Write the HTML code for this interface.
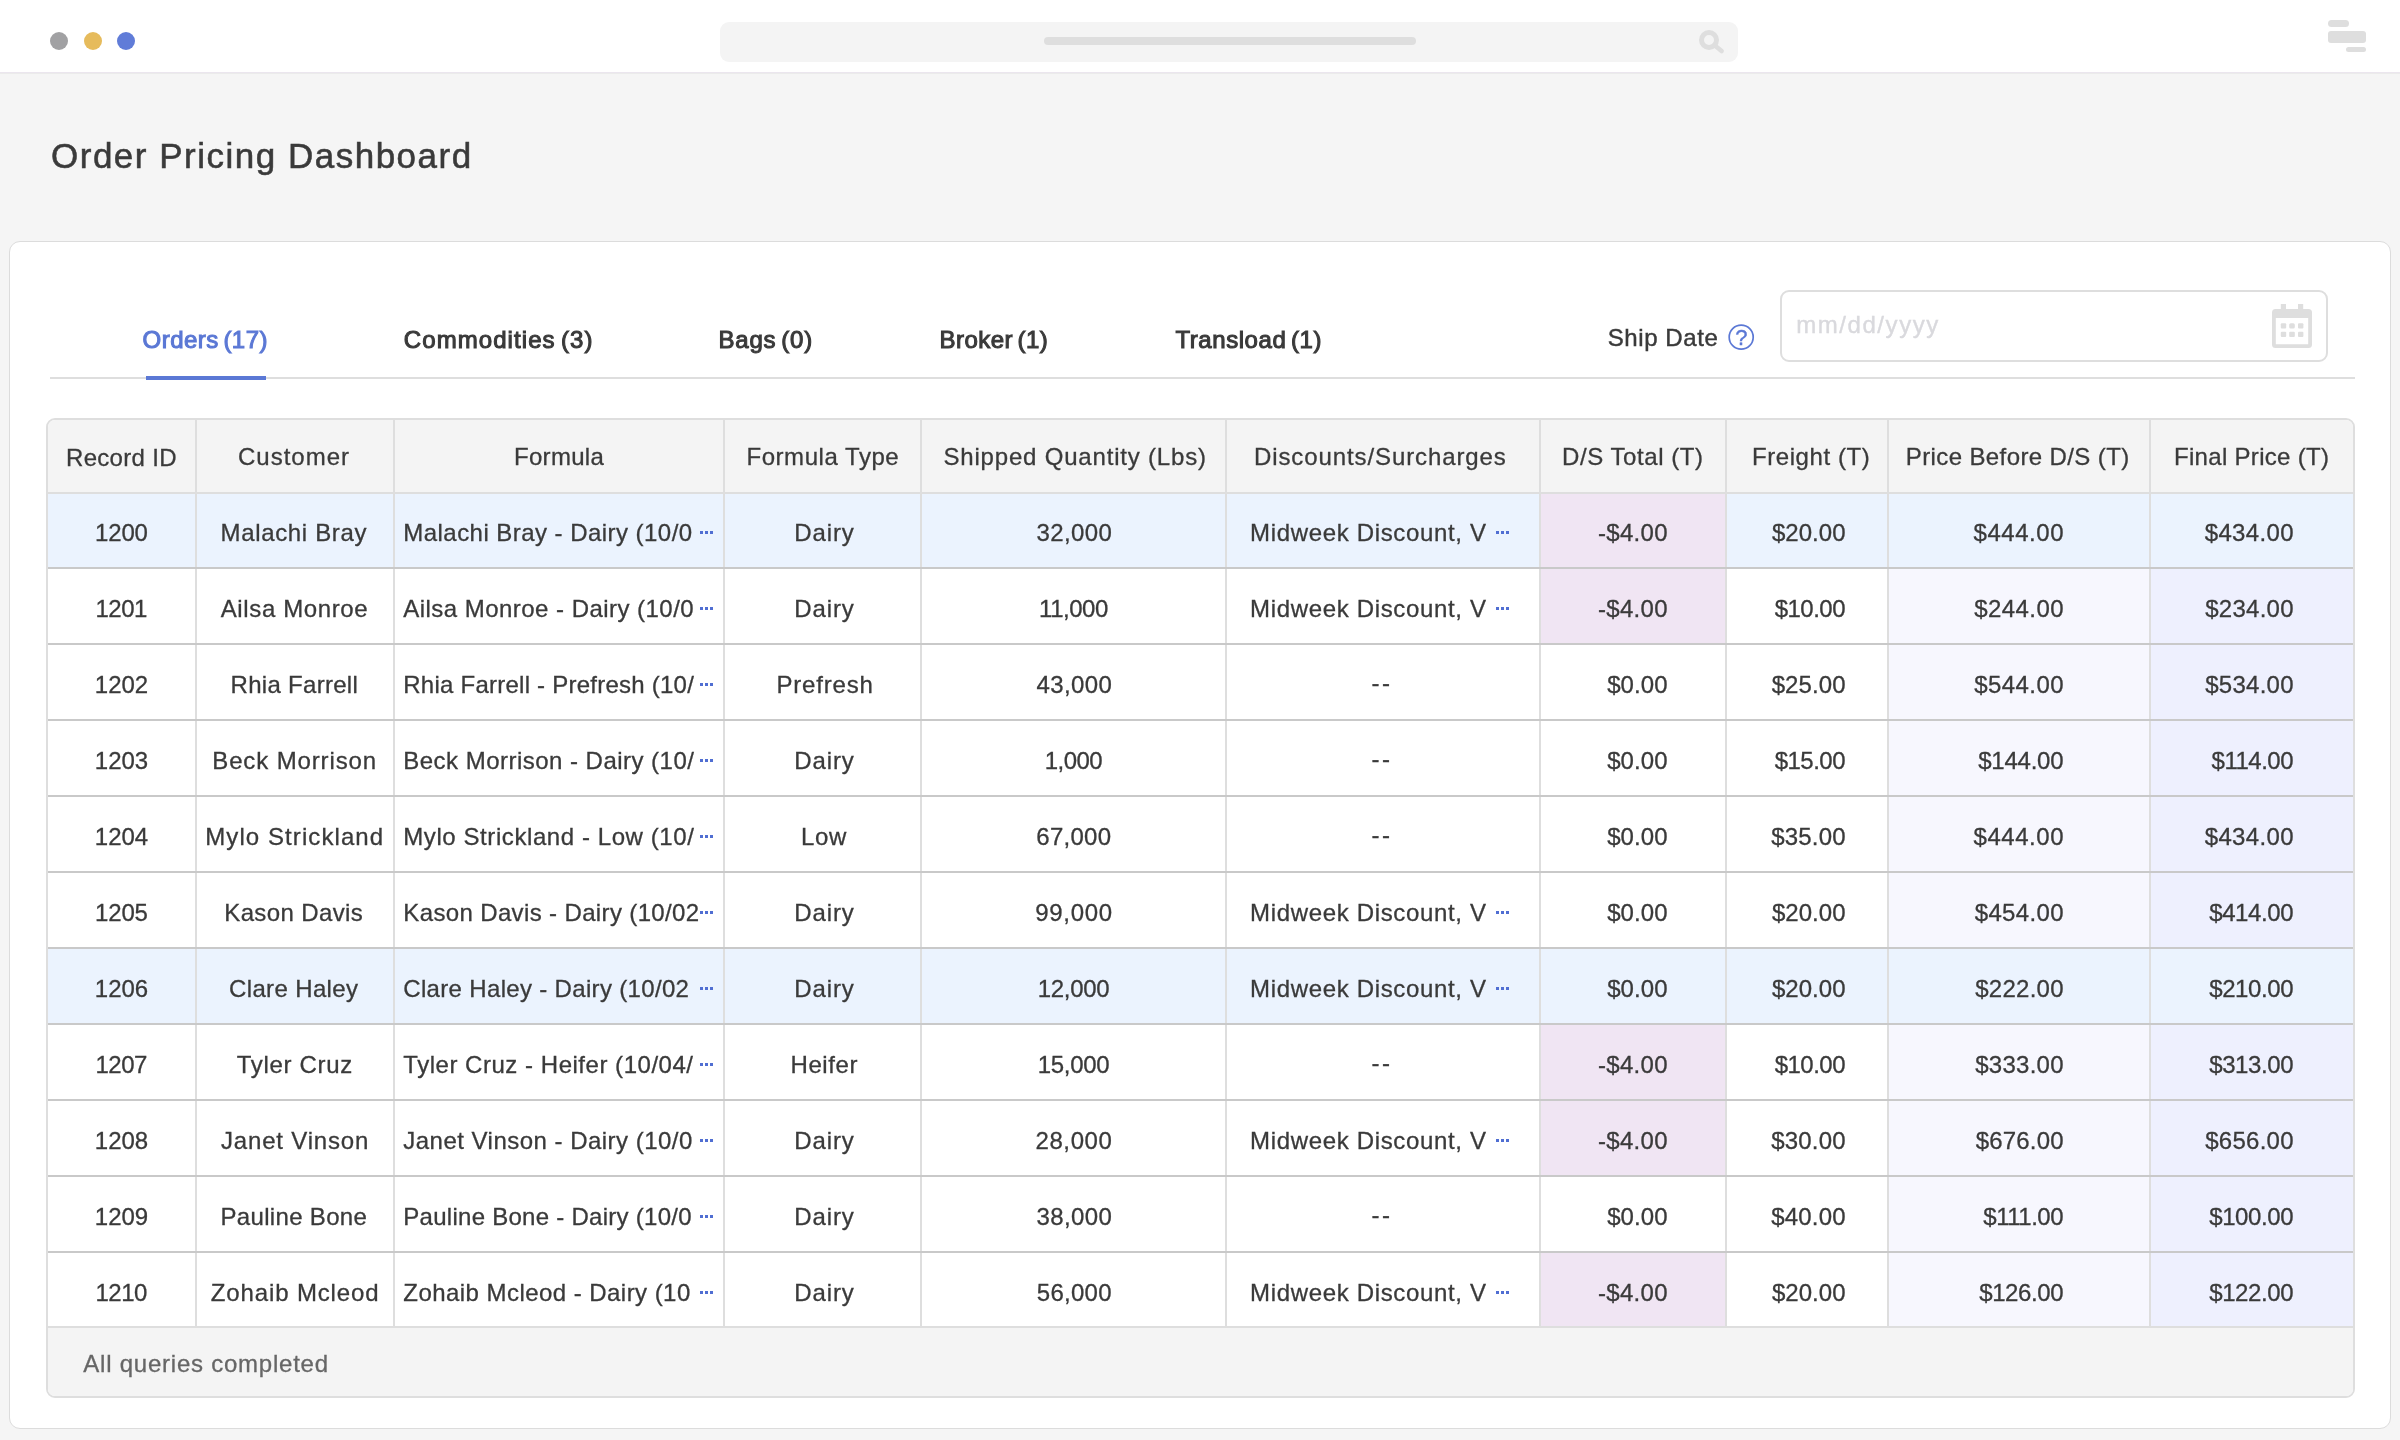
<!DOCTYPE html><html lang="en"><head><meta charset="utf-8"><title>Order Pricing Dashboard</title><style>*{box-sizing:border-box;margin:0;padding:0}
html,body{width:2400px;height:1440px;overflow:hidden}
body{background:#f5f5f5;font-family:"Liberation Sans",sans-serif;color:#3b3b3b;position:relative}
.hdr{position:absolute;left:0;top:0;width:2400px;height:73px;background:#fff;border-bottom:1px solid #ebe6ee;box-shadow:0 1px 0 #ebebeb}
.dot{position:absolute;top:32px;width:18px;height:18px;border-radius:50%}
.search{position:absolute;left:720px;top:22px;width:1018px;height:40px;border-radius:9px;background:#f4f4f4}
.search .bar{position:absolute;left:324px;top:15px;width:372px;height:8px;border-radius:4px;background:#dedede}
.search svg{position:absolute;left:976px;top:7px}
.menu{position:absolute;left:2328px;top:20px;width:40px;height:34px}
.menu i{position:absolute;background:#dedede;display:block}
.card{position:absolute;left:9px;top:241px;width:2382px;height:1188px;background:#fff;border:1px solid #dcdcdc;border-radius:11px}
.tabs{position:absolute;left:0;top:0}
.tabline{position:absolute;left:50px;top:377px;width:2305px;height:2px;background:#dedede}
.tabon{position:absolute;left:146px;top:376px;width:120px;height:4px;background:#5b78d5}
.help{position:absolute;left:1728px;top:324px}
.inp{position:absolute;left:1780px;top:290px;width:548px;height:72px;border:2px solid #dedede;border-radius:9px;background:#fff}
.inp svg{position:absolute;left:490px;top:12px}
.tbl{position:absolute;left:46px;top:418px;width:2309px;height:980px;border:2px solid #dedede;border-radius:9px;overflow:hidden;background:#fff}
.tr{position:absolute;left:0;width:2305px}
.tr.th{top:0;height:72px;background:#f4f4f4}
.tr.hl{background:#ebf3fe}
.bg{position:absolute;top:0;height:100%;display:block}
.bg.d8{background:#f7f7fe}
.bg.d9{background:#eef0fe}
.bg.neg{background:#f0e5f3}
.tx{position:absolute;left:0;top:0;width:2305px;height:976px}
.tx{will-change:transform}
.tx span{position:absolute;font-size:24px;line-height:30px;white-space:nowrap;color:#3a3a3a;-webkit-text-stroke:.3px #3a3a3a}
.tx span.ft{color:#666;-webkit-text-stroke:.3px #666}
.el{display:block;position:absolute;width:13px;height:3.4px;background:linear-gradient(90deg,#506ed2 0,#506ed2 3px,transparent 3px,transparent 5px,#506ed2 5px,#506ed2 8px,transparent 8px,transparent 10px,#506ed2 10px,#506ed2 13px)}
.vl{position:absolute;top:0;width:2px;height:908px;background:#dedede}
.hl0{position:absolute;left:0;width:2305px;height:2px;background:#dedede}
.hl1{position:absolute;left:0;width:2305px;height:2px;background:#c9c9c9}
.foot{position:absolute;left:0;top:908px;width:2305px;height:68px;background:#f4f4f4}
.tt{position:absolute;left:0;top:0;width:2400px;height:420px;will-change:transform}
.tt span{position:absolute;white-space:nowrap;color:#3a3a3a}
.tt .h1{font-size:35px;-webkit-text-stroke:.55px #3a3a3a}
.tt .q{font-size:22px;color:#5b78d5;-webkit-text-stroke:.4px #5b78d5}
.tt .tab{font-size:24px;-webkit-text-stroke:1.05px #3a3a3a}
.tt .tab.on{color:#5b78d5;-webkit-text-stroke:1.05px #5b78d5}
.tt .ship{font-size:24px;-webkit-text-stroke:.45px #3a3a3a}
.tt .ph{font-size:24px;color:#d9d9dd;-webkit-text-stroke:.4px #d9d9dd}
</style></head><body>
<div class="hdr">
<div class="dot" style="left:50px;background:#a1a1a3"></div>
<div class="dot" style="left:83.5px;background:#e6bb5c"></div>
<div class="dot" style="left:117px;background:#607cd8"></div>
<div class="search"><div class="bar"></div>
<svg width="32" height="28" viewBox="0 0 32 28"><circle cx="13" cy="11" r="7.5" fill="none" stroke="#dedede" stroke-width="5"/><path d="M18.5 16.3 L25.6 22" stroke="#dedede" stroke-width="4.6" stroke-linecap="round"/></svg>
</div>
<div class="menu"><i style="left:0;top:0;width:21px;height:7px;border-radius:3.5px"></i><i style="left:0;top:10.5px;width:38px;height:12.5px;border-radius:3px"></i><i style="left:18px;top:27px;width:20px;height:5px;border-radius:2.5px"></i></div>
</div>
<div class="card"></div>
<div class="tabline"></div><div class="tabon"></div>
<svg class="help" width="27" height="27" viewBox="0 0 27 27"><circle cx="13.2" cy="13.2" r="12" fill="none" stroke="#5b78d5" stroke-width="1.7"/></svg>
<div class="inp">
<svg width="44" height="48" viewBox="0 0 44 48"><g fill="#dedede"><rect x="8.8" y="0" width="5.2" height="7"/><rect x="26" y="0" width="5.2" height="7"/><path d="M3.5 5 h33 a3.5 3.5 0 0 1 3.5 3.5 v32 a3.5 3.5 0 0 1 -3.5 3.5 h-33 a3.5 3.5 0 0 1 -3.5 -3.5 v-32 a3.5 3.5 0 0 1 3.5 -3.5 z M3.8 14 v26.2 h32.4 v-26.2 z" fill-rule="evenodd"/><rect x="8.8" y="19.2" width="5.4" height="5.4" rx="1"/><rect x="17.2" y="19.2" width="5.6" height="5.4" rx="1.6"/><rect x="26" y="19.2" width="5.4" height="5.4" rx="1"/><rect x="8.8" y="27.7" width="5.4" height="5.4" rx="1"/><rect x="17.2" y="27.7" width="5.6" height="5.4" rx="1"/><rect x="26" y="27.7" width="5.4" height="5.4" rx="1"/></g></svg>
</div>
<div class="tt">
<span class="h1" style="left:51.00px;top:134.17px;line-height:44px;letter-spacing:1.502px;word-spacing:0px">Order Pricing Dashboard</span>
<span class="tab on" style="left:142.60px;top:324.88px;line-height:30px;letter-spacing:0.470px;word-spacing:-2.5px">Orders (17)</span>
<span class="tab" style="left:403.80px;top:324.88px;line-height:30px;letter-spacing:1.075px;word-spacing:-2.5px">Commodities (3)</span>
<span class="tab" style="left:718.50px;top:324.88px;line-height:30px;letter-spacing:0.784px;word-spacing:-2.5px">Bags (0)</span>
<span class="tab" style="left:939.50px;top:324.88px;line-height:30px;letter-spacing:0.445px;word-spacing:-2.5px">Broker (1)</span>
<span class="tab" style="left:1175.50px;top:324.88px;line-height:30px;letter-spacing:0.555px;word-spacing:-2.5px">Transload (1)</span>
<span class="ship" style="left:1607.70px;top:322.88px;line-height:30px;letter-spacing:0.594px;word-spacing:0px">Ship Date</span>
<span class="ph" style="left:1796.20px;top:310.38px;line-height:30px;letter-spacing:1.565px;word-spacing:0px">mm/dd/yyyy</span>
<span class="q" style="left:1735.2px;top:323.6px;line-height:28px">?</span>
</div>
<div>

<div class="tbl">
<div class="tr th"></div>
<div class="tr hl" style="top:74px;height:73px">
<i class="bg neg" style="left:1493px;width:184px"></i>
</div>
<div class="tr" style="top:149px;height:74px">
<i class="bg neg" style="left:1493px;width:184px"></i>
<i class="bg d8" style="left:1841px;width:260px"></i>
<i class="bg d9" style="left:2103px;width:202px"></i>
</div>
<div class="tr" style="top:225px;height:74px">
<i class="bg d8" style="left:1841px;width:260px"></i>
<i class="bg d9" style="left:2103px;width:202px"></i>
</div>
<div class="tr" style="top:301px;height:74px">
<i class="bg d8" style="left:1841px;width:260px"></i>
<i class="bg d9" style="left:2103px;width:202px"></i>
</div>
<div class="tr" style="top:377px;height:74px">
<i class="bg d8" style="left:1841px;width:260px"></i>
<i class="bg d9" style="left:2103px;width:202px"></i>
</div>
<div class="tr" style="top:453px;height:74px">
<i class="bg d8" style="left:1841px;width:260px"></i>
<i class="bg d9" style="left:2103px;width:202px"></i>
</div>
<div class="tr hl" style="top:529px;height:74px">
</div>
<div class="tr" style="top:605px;height:74px">
<i class="bg neg" style="left:1493px;width:184px"></i>
<i class="bg d8" style="left:1841px;width:260px"></i>
<i class="bg d9" style="left:2103px;width:202px"></i>
</div>
<div class="tr" style="top:681px;height:74px">
<i class="bg neg" style="left:1493px;width:184px"></i>
<i class="bg d8" style="left:1841px;width:260px"></i>
<i class="bg d9" style="left:2103px;width:202px"></i>
</div>
<div class="tr" style="top:757px;height:74px">
<i class="bg d8" style="left:1841px;width:260px"></i>
<i class="bg d9" style="left:2103px;width:202px"></i>
</div>
<div class="tr" style="top:833px;height:73px">
<i class="bg neg" style="left:1493px;width:184px"></i>
<i class="bg d8" style="left:1841px;width:260px"></i>
<i class="bg d9" style="left:2103px;width:202px"></i>
</div>
<div class="vl" style="left:147px"></div>
<div class="vl" style="left:345px"></div>
<div class="vl" style="left:675px"></div>
<div class="vl" style="left:872px"></div>
<div class="vl" style="left:1177px"></div>
<div class="vl" style="left:1491px"></div>
<div class="vl" style="left:1677px"></div>
<div class="vl" style="left:1839px"></div>
<div class="vl" style="left:2101px"></div>
<div class="hl0" style="top:72px"></div>
<div class="hl1" style="top:147px"></div>
<div class="hl1" style="top:223px"></div>
<div class="hl1" style="top:299px"></div>
<div class="hl1" style="top:375px"></div>
<div class="hl1" style="top:451px"></div>
<div class="hl1" style="top:527px"></div>
<div class="hl1" style="top:603px"></div>
<div class="hl1" style="top:679px"></div>
<div class="hl1" style="top:755px"></div>
<div class="hl1" style="top:831px"></div>
<div class="hl0" style="top:906px"></div>
<div class="foot"></div>
<div class="tx">
<span style="left:18.00px;top:22.88px;letter-spacing:0.312px">Record ID</span>
<span style="left:190.00px;top:22.18px;letter-spacing:0.995px">Customer</span>
<span style="left:466.00px;top:22.18px;letter-spacing:0.305px">Formula</span>
<span style="left:698.50px;top:22.18px;letter-spacing:0.539px">Formula Type</span>
<span style="left:895.50px;top:22.18px;letter-spacing:0.810px">Shipped Quantity (Lbs)</span>
<span style="left:1206.00px;top:22.18px;letter-spacing:0.894px">Discounts/Surcharges</span>
<span style="left:1514.00px;top:22.18px;letter-spacing:0.567px">D/S Total (T)</span>
<span style="left:1704.00px;top:22.18px;letter-spacing:0.573px">Freight (T)</span>
<span style="left:1857.80px;top:22.18px;letter-spacing:0.387px">Price Before D/S (T)</span>
<span style="left:2126.00px;top:22.18px;letter-spacing:0.308px">Final Price (T)</span>
<span style="left:47.05px;top:97.68px;letter-spacing:-0.181px">1200</span>
<span style="left:172.50px;top:97.68px;letter-spacing:0.662px">Malachi Bray</span>
<span style="left:355.30px;top:97.68px;letter-spacing:0.457px">Malachi Bray - Dairy (10/0</span>
<i class="el" style="left:652.3px;top:110.60000000000002px"></i>
<span style="left:746.25px;top:97.68px;letter-spacing:0.874px">Dairy</span>
<span style="left:988.50px;top:97.68px;letter-spacing:0.388px">32,000</span>
<span style="left:1202.00px;top:97.68px;letter-spacing:0.662px">Midweek Discount, V</span>
<i class="el" style="left:1448px;top:110.60000000000002px"></i>
<span style="left:1549.95px;top:97.68px;letter-spacing:0.309px">-$4.00</span>
<span style="left:1723.95px;top:97.68px;letter-spacing:0.038px">$20.00</span>
<span style="left:1925.60px;top:97.68px;letter-spacing:0.532px">$444.00</span>
<span style="left:2156.70px;top:97.68px;letter-spacing:0.349px">$434.00</span>
<span style="left:47.53px;top:173.68px;letter-spacing:-0.500px">1201</span>
<span style="left:172.75px;top:173.68px;letter-spacing:0.617px">Ailsa Monroe</span>
<span style="left:355.30px;top:173.68px;letter-spacing:0.463px">Ailsa Monroe - Dairy (10/0</span>
<i class="el" style="left:652.3px;top:186.60000000000002px"></i>
<span style="left:746.25px;top:173.68px;letter-spacing:0.874px">Dairy</span>
<span style="left:991.11px;top:173.68px;letter-spacing:-0.500px">11,000</span>
<span style="left:1202.00px;top:173.68px;letter-spacing:0.662px">Midweek Discount, V</span>
<i class="el" style="left:1448px;top:186.60000000000002px"></i>
<span style="left:1549.95px;top:173.68px;letter-spacing:0.309px">-$4.00</span>
<span style="left:1726.64px;top:173.68px;letter-spacing:-0.500px">$10.00</span>
<span style="left:1926.20px;top:173.68px;letter-spacing:0.432px">$244.00</span>
<span style="left:2157.20px;top:173.68px;letter-spacing:0.266px">$234.00</span>
<span style="left:46.80px;top:249.68px;letter-spacing:-0.014px">1202</span>
<span style="left:182.50px;top:249.68px;letter-spacing:0.300px">Rhia Farrell</span>
<span style="left:355.30px;top:249.68px;letter-spacing:0.240px">Rhia Farrell - Prefresh (10/</span>
<i class="el" style="left:652.3px;top:262.6px"></i>
<span style="left:728.50px;top:249.68px;letter-spacing:0.806px">Prefresh</span>
<span style="left:988.50px;top:249.68px;letter-spacing:0.388px">43,000</span>
<span style="left:1323.50px;top:247.68px;letter-spacing:2.508px">--</span>
<span style="left:1559.20px;top:249.68px;letter-spacing:0.072px">$0.00</span>
<span style="left:1723.70px;top:249.68px;letter-spacing:0.088px">$25.00</span>
<span style="left:1926.20px;top:249.68px;letter-spacing:0.432px">$544.00</span>
<span style="left:2157.20px;top:249.68px;letter-spacing:0.266px">$534.00</span>
<span style="left:46.80px;top:325.68px;letter-spacing:-0.014px">1203</span>
<span style="left:164.25px;top:325.68px;letter-spacing:0.873px">Beck Morrison</span>
<span style="left:355.30px;top:325.68px;letter-spacing:0.474px">Beck Morrison - Dairy (10/</span>
<i class="el" style="left:652.3px;top:338.6px"></i>
<span style="left:746.25px;top:325.68px;letter-spacing:0.874px">Dairy</span>
<span style="left:996.64px;top:325.68px;letter-spacing:-0.500px">1,000</span>
<span style="left:1323.50px;top:323.68px;letter-spacing:2.508px">--</span>
<span style="left:1559.20px;top:325.68px;letter-spacing:0.072px">$0.00</span>
<span style="left:1726.64px;top:325.68px;letter-spacing:-0.500px">$15.00</span>
<span style="left:1930.20px;top:325.68px;letter-spacing:-0.234px">$144.00</span>
<span style="left:2163.57px;top:325.68px;letter-spacing:-0.500px">$114.00</span>
<span style="left:46.80px;top:401.68px;letter-spacing:-0.014px">1204</span>
<span style="left:157.25px;top:401.68px;letter-spacing:1.081px">Mylo Strickland</span>
<span style="left:355.30px;top:401.68px;letter-spacing:0.579px">Mylo Strickland - Low (10/</span>
<i class="el" style="left:652.3px;top:414.6px"></i>
<span style="left:753.00px;top:401.68px;letter-spacing:0.652px">Low</span>
<span style="left:988.25px;top:401.68px;letter-spacing:0.288px">67,000</span>
<span style="left:1323.50px;top:399.68px;letter-spacing:2.508px">--</span>
<span style="left:1559.20px;top:401.68px;letter-spacing:0.072px">$0.00</span>
<span style="left:1723.20px;top:401.68px;letter-spacing:0.188px">$35.00</span>
<span style="left:1925.60px;top:401.68px;letter-spacing:0.532px">$444.00</span>
<span style="left:2156.70px;top:401.68px;letter-spacing:0.349px">$434.00</span>
<span style="left:47.05px;top:477.68px;letter-spacing:-0.181px">1205</span>
<span style="left:176.25px;top:477.68px;letter-spacing:0.377px">Kason Davis</span>
<span style="left:355.30px;top:477.68px;letter-spacing:0.363px">Kason Davis - Dairy (10/02</span>
<i class="el" style="left:652.3px;top:490.6px"></i>
<span style="left:746.25px;top:477.68px;letter-spacing:0.874px">Dairy</span>
<span style="left:987.25px;top:477.68px;letter-spacing:0.688px">99,000</span>
<span style="left:1202.00px;top:477.68px;letter-spacing:0.662px">Midweek Discount, V</span>
<i class="el" style="left:1448px;top:490.6px"></i>
<span style="left:1559.20px;top:477.68px;letter-spacing:0.072px">$0.00</span>
<span style="left:1723.95px;top:477.68px;letter-spacing:0.038px">$20.00</span>
<span style="left:1926.70px;top:477.68px;letter-spacing:0.349px">$454.00</span>
<span style="left:2161.20px;top:477.68px;letter-spacing:-0.401px">$414.00</span>
<span style="left:46.80px;top:553.68px;letter-spacing:-0.014px">1206</span>
<span style="left:181.00px;top:553.68px;letter-spacing:0.362px">Clare Haley</span>
<span style="left:355.30px;top:553.68px;letter-spacing:0.329px">Clare Haley - Dairy (10/02</span>
<i class="el" style="left:652.3px;top:566.6px"></i>
<span style="left:746.25px;top:553.68px;letter-spacing:0.874px">Dairy</span>
<span style="left:989.75px;top:553.68px;letter-spacing:-0.312px">12,000</span>
<span style="left:1202.00px;top:553.68px;letter-spacing:0.662px">Midweek Discount, V</span>
<i class="el" style="left:1448px;top:566.6px"></i>
<span style="left:1559.20px;top:553.68px;letter-spacing:0.072px">$0.00</span>
<span style="left:1723.95px;top:553.68px;letter-spacing:0.038px">$20.00</span>
<span style="left:1927.20px;top:553.68px;letter-spacing:0.266px">$222.00</span>
<span style="left:2161.20px;top:553.68px;letter-spacing:-0.401px">$210.00</span>
<span style="left:47.53px;top:629.68px;letter-spacing:-0.500px">1207</span>
<span style="left:188.75px;top:629.68px;letter-spacing:0.684px">Tyler Cruz</span>
<span style="left:355.30px;top:629.68px;letter-spacing:0.523px">Tyler Cruz - Heifer (10/04/</span>
<i class="el" style="left:652.3px;top:642.5999999999999px"></i>
<span style="left:742.50px;top:629.68px;letter-spacing:0.595px">Heifer</span>
<span style="left:989.75px;top:629.68px;letter-spacing:-0.312px">15,000</span>
<span style="left:1323.50px;top:627.68px;letter-spacing:2.508px">--</span>
<span style="left:1549.95px;top:629.68px;letter-spacing:0.309px">-$4.00</span>
<span style="left:1726.64px;top:629.68px;letter-spacing:-0.500px">$10.00</span>
<span style="left:1927.20px;top:629.68px;letter-spacing:0.266px">$333.00</span>
<span style="left:2161.20px;top:629.68px;letter-spacing:-0.401px">$313.00</span>
<span style="left:46.80px;top:705.68px;letter-spacing:-0.014px">1208</span>
<span style="left:173.00px;top:705.68px;letter-spacing:0.820px">Janet Vinson</span>
<span style="left:355.30px;top:705.68px;letter-spacing:0.481px">Janet Vinson - Dairy (10/0</span>
<i class="el" style="left:652.3px;top:718.5999999999999px"></i>
<span style="left:746.25px;top:705.68px;letter-spacing:0.874px">Dairy</span>
<span style="left:987.50px;top:705.68px;letter-spacing:0.588px">28,000</span>
<span style="left:1202.00px;top:705.68px;letter-spacing:0.662px">Midweek Discount, V</span>
<i class="el" style="left:1448px;top:718.5999999999999px"></i>
<span style="left:1549.95px;top:705.68px;letter-spacing:0.309px">-$4.00</span>
<span style="left:1723.20px;top:705.68px;letter-spacing:0.188px">$30.00</span>
<span style="left:1927.70px;top:705.68px;letter-spacing:0.182px">$676.00</span>
<span style="left:2157.20px;top:705.68px;letter-spacing:0.266px">$656.00</span>
<span style="left:46.80px;top:781.68px;letter-spacing:-0.014px">1209</span>
<span style="left:172.50px;top:781.68px;letter-spacing:0.324px">Pauline Bone</span>
<span style="left:355.30px;top:781.68px;letter-spacing:0.271px">Pauline Bone - Dairy (10/0</span>
<i class="el" style="left:652.3px;top:794.5999999999999px"></i>
<span style="left:746.25px;top:781.68px;letter-spacing:0.874px">Dairy</span>
<span style="left:988.50px;top:781.68px;letter-spacing:0.388px">38,000</span>
<span style="left:1323.50px;top:779.68px;letter-spacing:2.508px">--</span>
<span style="left:1559.20px;top:781.68px;letter-spacing:0.072px">$0.00</span>
<span style="left:1723.20px;top:781.68px;letter-spacing:0.188px">$40.00</span>
<span style="left:1935.36px;top:781.68px;letter-spacing:-0.500px">$111.00</span>
<span style="left:2161.20px;top:781.68px;letter-spacing:-0.401px">$100.00</span>
<span style="left:47.53px;top:857.68px;letter-spacing:-0.500px">1210</span>
<span style="left:162.75px;top:857.68px;letter-spacing:0.869px">Zohaib Mcleod</span>
<span style="left:355.30px;top:857.68px;letter-spacing:0.452px">Zohaib Mcleod - Dairy (10</span>
<i class="el" style="left:652.3px;top:870.5999999999999px"></i>
<span style="left:746.25px;top:857.68px;letter-spacing:0.874px">Dairy</span>
<span style="left:988.75px;top:857.68px;letter-spacing:0.288px">56,000</span>
<span style="left:1202.00px;top:857.68px;letter-spacing:0.662px">Midweek Discount, V</span>
<i class="el" style="left:1448px;top:870.5999999999999px"></i>
<span style="left:1549.95px;top:857.68px;letter-spacing:0.309px">-$4.00</span>
<span style="left:1723.95px;top:857.68px;letter-spacing:0.038px">$20.00</span>
<span style="left:1931.20px;top:857.68px;letter-spacing:-0.401px">$126.00</span>
<span style="left:2161.20px;top:857.68px;letter-spacing:-0.401px">$122.00</span>
<span class="ft" style="left:35.30px;top:929.18px;letter-spacing:0.765px">All queries completed</span>
</div>
</div>
</div></body></html>
